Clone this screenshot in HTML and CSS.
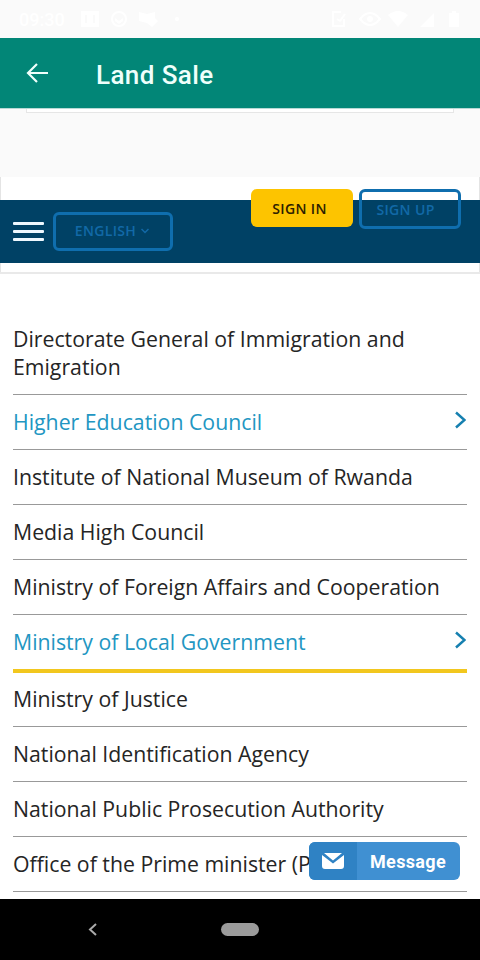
FILE: index.html
```html
<!DOCTYPE html>
<html lang="en">
<head>
<meta charset="utf-8">
<title>Land Sale</title>
<link rel="stylesheet" href="styles.css">
</head>
<body>
<div class="phone">
  <div class="status">
    <span class="clock">09:30</span>
    <svg class="notifications" width="104" height="18" viewBox="0 0 104 18">
      <path fill-rule="evenodd" d="M1 1h18v16H1zM5 5v8h2V5zm8 0v8h2V5z"/>
      <circle cx="39" cy="9" r="7" class="outline"/><path d="M35 8l4 3 4-3v3l-4 3-4-3z"/>
      <path d="M59 2l8 2 8-2v6l3 3-6 6-5-4-8-2z"/><circle cx="97" cy="9" r="2"/>
    </svg>
    <svg class="system" width="132" height="18" viewBox="0 0 132 18">
      <path class="outline" d="M11 2H3v14h11V9M7 9l3 2 5-7M30 9q10-12 20 0-10 12-20 0z"/><circle cx="40" cy="9" r="3"/>
      <path d="M58 5q10-8 20 0L68 17zM90 17L104 3v14zM119 3h3V1h4v2h3v14h-10z"/>
    </svg>
  </div>
  <header class="appbar">
    <svg class="back" width="22" height="20" viewBox="0 0 22 20"><path d="M22 10H2M11 1L2 10l9 9"/></svg>
    <h1>Land Sale</h1>
  </header>
  <div class="page-gap"><div class="card-edge"></div></div>
  <div class="site-header">
    <nav class="navbar">
      <div class="burger"><i></i><i></i><i></i></div>
      <div class="btn language">ENGLISH <svg width="8" height="6" viewBox="0 0 8 6"><path d="M.5 1L4 4.5 7.5 1"/></svg></div>
      <div class="account">
        <div class="btn signin">SIGN IN</div>
        <div class="btn signup">SIGN UP</div>
      </div>
    </nav>
  </div>
  <main>
    <ul class="agencies">
      <li><span>Directorate General of Immigration and Emigration</span></li>
      <li class="link"><span>Higher Education Council</span><svg width="11" height="18" viewBox="0 0 11 18"><path d="M1 1.5L9.5 9 1 16.500"/></svg></li>
      <li><span>Institute of National Museum of Rwanda</span></li>
      <li><span>Media High Council</span></li>
      <li><span>Ministry of Foreign Affairs and Cooperation</span></li>
      <li class="link selected"><span>Ministry of Local Government</span><svg width="11" height="18" viewBox="0 0 11 18"><path d="M1 1.5L9.5 9 1 16.500"/></svg></li>
      <li><span>Ministry of Justice</span></li>
      <li><span>National Identification Agency</span></li>
      <li><span>National Public Prosecution Authority</span></li>
      <li><span>Office of the Prime minister (P</span></li>
    </ul>
    <div class="message">
      <div class="mail"><svg width="22" height="16" viewBox="0 0 22 16"><path d="M2 0h18l-9 7.500zM0 2l11 8.500L22 2v11q0 3-3 3H3q-3 0-3-3z"/></svg></div>
      <span>Message</span>
    </div>
  </main>
  <footer class="sysnav">
    <svg width="9" height="13" viewBox="0 0 9 13"><path d="M8 1L2 6.500 8 12"/></svg>
    <div class="pill"></div>
  </footer>
</div>
</body>
</html>
```
FILE: styles.css
```css
* { box-sizing: border-box; }
body { margin: 0; background: #fff; font-family: "Open Sans", sans-serif; }
.phone { width: 480px; height: 960px; overflow: hidden; display: flex; flex-direction: column; }
.status { height: 38px; flex: none; display: flex; align-items: center; padding: 0 18px 0 19px; background: #fafafa; color: #fff; font: 500 18px Roboto, sans-serif; }
.status svg { fill: #fff; }
.status .outline { fill: none; stroke: #fff; stroke-width: 2; }
.notifications { margin-left: 15px; }
.system { margin-left: auto; }
.appbar { height: 70px; flex: none; display: flex; align-items: center; padding: 2px 0 0 26px; background: #028677; color: #effffb; }
.appbar h1 { margin: 1px 0 0 48px; font: 500 26px/30px Roboto, sans-serif; letter-spacing: .4px; }
.back { fill: none; stroke: #effffb; stroke-width: 2.200; margin-top: -2px; }
.page-gap { height: 69px; flex: none; background: #fafafa; padding: 0 26px; border-top: 1px solid #b8d9d5; }
.card-edge { height: 4px; background: #fff; border: 1px solid #e6e6e6; border-top: 0; }
.site-header { height: 97px; flex: none; padding-top: 23px; border-bottom: 2px solid #e9e9e9; background: linear-gradient(#e4e4e4, #e4e4e4) left / 1px 100% no-repeat, linear-gradient(#e4e4e4, #e4e4e4) right / 1px 100% no-repeat, #fff; }
.navbar { height: 63px; display: flex; align-items: center; padding: 0 19px 0 13px; background: #004165; }
.burger { width: 31px; display: grid; gap: 5px; }
.burger i { height: 3px; background: #eef8ff; border-radius: 1px; }
.btn { height: 39px; display: flex; align-items: center; justify-content: center; border: 2px solid #1474b8; border-radius: 6px; color: #1269a7; font-size: 14px; font-weight: 600; letter-spacing: .35px; white-space: nowrap; }
.language { width: 120px; margin-left: 9px; padding-right: 2px; padding-bottom: 2px; gap: 5px; }
.language svg { fill: none; stroke: #1269a7; stroke-width: 1.500; }
.account { margin-left: auto; display: flex; gap: 6px; align-self: flex-start; margin-top: -11px; }
.signin { width: 102px; height: 38px; background: #fdc400; border: 0; color: #2c2000; padding-right: 5px; }
.signup { width: 102px; height: 40px; padding-right: 9px; }
.language, .signup { border-width: 3px; border-color: #0f6eae; }
main { height: 625px; flex: none; position: relative; overflow: hidden; padding: 38px 13.500px 0 13px; }
.agencies { list-style: none; margin: 0; padding: 0; }
.agencies li { display: flex; justify-content: space-between; padding: 13px 0; border-bottom: 1px solid #999; font-size: 21.270px; line-height: 28px; color: #252525; }
.agencies .link { color: #2296c2; }
.agencies svg { fill: none; stroke: #1680b0; stroke-width: 2.500; margin: 3px 1px 0 0; }
.agencies .selected { border-bottom: 4px solid #f2c71e; }
.agencies .selected + li { padding-top: 12px; }
.message { position: absolute; left: 309px; top: 568px; width: 151px; height: 38px; display: flex; align-items: center; border-radius: 6px; overflow: hidden; background: #4090d2; color: #fff; font: 700 18px Roboto, sans-serif; letter-spacing: .35px; }
.mail { width: 48px; height: 38px; display: flex; align-items: center; justify-content: center; background: #2f82c4; }
.mail svg { fill: #fff; }
.message span { margin-left: 13px; }
.sysnav { height: 61px; flex: none; background: #000; display: flex; align-items: center; padding-left: 88px; }
.sysnav svg { fill: none; stroke: #aaa; stroke-width: 2; }
.pill { width: 38px; height: 13px; border-radius: 7px; background: #9b9b9b; margin-left: 124px; }
```
